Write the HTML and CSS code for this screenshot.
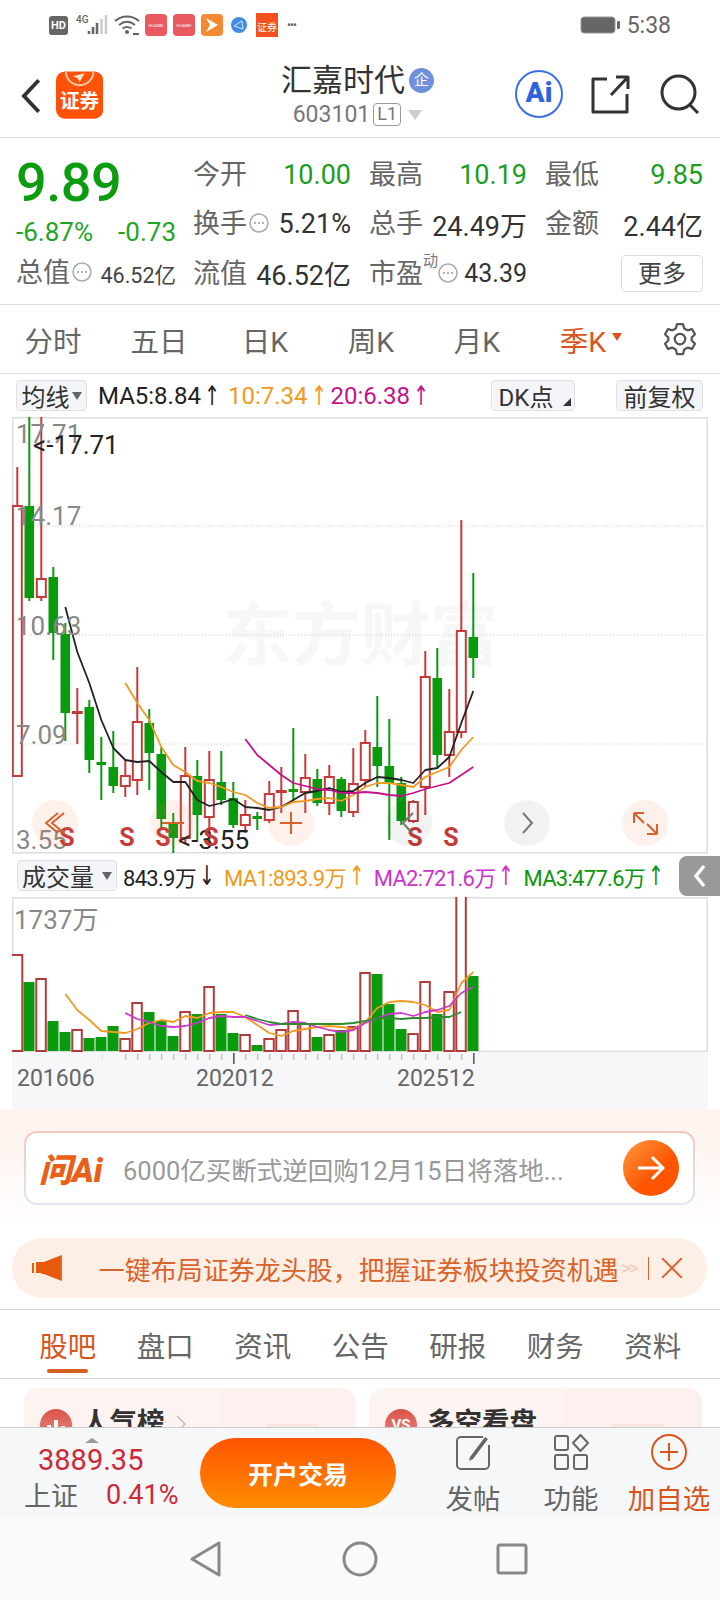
FILE: index.html
```html
<!DOCTYPE html>
<html lang="zh-CN">
<head>
<meta charset="utf-8">
<title>汇嘉时代 603101</title>
<link rel="stylesheet" href="styles.css">
</head>
<body>
<svg class="defs" width="0" height="0">
  <symbol id="more" viewBox="0 0 20 20">
    <circle cx="10" cy="10" r="9" fill="none" stroke="#aaa" stroke-width="1.5"/>
    <circle cx="6" cy="10" r="1" fill="#999"/><circle cx="10" cy="10" r="1" fill="#999"/><circle cx="14" cy="10" r="1" fill="#999"/>
  </symbol>
</svg>

<main class="page">
  <div class="status">
    <span class="hd">HD</span>
    <svg class="sig" width="33" height="22" viewBox="0 0 33 22">
      <text class="sig-4g" x="0" y="9">4G</text>
      <path d="M13 20v-3M17 20v-7M21 20V9" stroke="#666" stroke-width="2.6" fill="none"/>
      <path d="M25.5 20V5M30 20V1" stroke="#ccc" stroke-width="2.6" fill="none"/>
    </svg>
    <svg class="wifi" width="26" height="20" viewBox="0 0 26 20" fill="none" stroke="#666" stroke-width="2">
      <path d="M1 6c7-6 17-6 24 0M5 10c5-4 11-4 16 0M8.5 13.5c3-2 6-2 9 0"/>
      <circle cx="13" cy="17" r="2" fill="#666" stroke="none"/>
      <path d="M19 19h6" stroke-width="2"/>
    </svg>
    <span class="tile tile-red">HUAWEI</span>
    <span class="tile tile-red">HUAWEI</span>
    <span class="tile tile-orange"><svg width="14" height="16" viewBox="0 0 14 16"><path d="M1 1l12 7-12 7 4-7z" fill="#fff"/></svg></span>
    <svg class="globe" width="16" height="16" viewBox="0 0 16 16"><circle cx="8" cy="8" r="8" fill="#3f8de6"/><path d="M3 9l8-5 1 8z" fill="none" stroke="#d6e8fb" stroke-width="1"/></svg>
    <span class="tile-sec">证券</span>
    <span class="dots">•••</span>
    <span class="clock-group">
      <svg width="41" height="18" viewBox="0 0 41 18"><rect x="1" y="1" width="34" height="16" rx="3" fill="#666" stroke="#999"/><rect x="37" y="5" width="3" height="8" rx="1" fill="#666"/></svg>
      <span class="clock">5:38</span>
    </span>
  </div>

  <header class="hdr">
    <svg class="back" width="20" height="36" viewBox="0 0 20 36"><path d="M18 2L3 18l15 16" fill="none" stroke="#333" stroke-width="4"/></svg>
    <svg class="logo" width="48" height="48" viewBox="0 0 48 48">
      <rect width="48" height="48" rx="9" fill="#ff5208"/>
      <path d="M10 0a14 14 0 0 0 28 0" fill="none" stroke="#ffc9ae" stroke-width="2"/>
      <path d="M17 5l12-3-5 9-2-4z" fill="#ffe2d2"/>
      <text class="logo-text" x="24" y="37">证券</text>
    </svg>
    <div class="title">
      <div class="name">汇嘉时代<span class="ent">企</span></div>
      <div class="code">603101<span class="lv">L1</span><span class="caret"></span></div>
    </div>
    <div class="hdr-tools">
      <span class="ai-round">Ai</span>
      <svg width="40" height="40" viewBox="0 0 40 40" fill="none" stroke="#333" stroke-width="3"><path d="M17 5H3v33h34V20M21 21L37 4M26 3h12v12" stroke-linejoin="round"/></svg>
      <svg width="40" height="40" viewBox="0 0 40 40" fill="none" stroke="#333" stroke-width="3"><circle cx="18.5" cy="18.5" r="16.5"/><path d="M30 31l8 8"/></svg>
    </div>
  </header>

  <section class="quote">
    <div class="quote-left">
      <div class="price">9.89</div>
      <div class="delta"><span>-6.87%</span><span>-0.73</span></div>
      <div class="cap"><span class="lbl">总值</span><svg class="info"><use href="#more"/></svg><span class="cap-val">46.52亿</span></div>
    </div>
    <div class="quote-grid">
      <div class="cell"><span class="lbl">今开</span><b class="up">10.00</b></div>
      <div class="cell"><span class="lbl">最高</span><b class="up">10.19</b></div>
      <div class="cell"><span class="lbl">最低</span><b class="up">9.85</b></div>
      <div class="cell"><span class="lbl">换手</span><svg class="info"><use href="#more"/></svg><b>5.21%</b></div>
      <div class="cell"><span class="lbl">总手</span><b>24.49万</b></div>
      <div class="cell"><span class="lbl">金额</span><b>2.44亿</b></div>
      <div class="cell"><span class="lbl">流值</span><b>46.52亿</b></div>
      <div class="cell"><span class="lbl">市盈</span><sup class="dyn">动</sup><svg class="info"><use href="#more"/></svg><b class="small">43.39</b></div>
      <div class="cell cell-end"><button class="more-btn">更多</button></div>
    </div>
  </section>

  <nav class="periods">
    <span>分时</span><span>五日</span><span>日K</span><span>周K</span><span>月K</span><span class="on">季K<i class="on-caret"></i></span>
    <svg class="gear" width="36" height="36" viewBox="0 0 24 24" fill="none" stroke="#555" stroke-width="1.5" stroke-linejoin="round"><path d="M10 2h4l.8 3 2.2 1.2 3-.8 2 3.4-2.2 2.2v2l2.2 2.2-2 3.4-3-.8-2.2 1.2-.8 3h-4l-.8-3-2.2-1.2-3 .8-2-3.4 2.2-2.2v-2L2 8.8l2-3.4 3 .8 2.2-1.2z"/><circle cx="12" cy="12" r="3.5"/></svg>
  </nav>

  <div class="mabar">
    <span class="chip chip-ma">均线<i class="tri"></i></span>
    <span class="ma ink ma5">MA5:8.84<i class="arr">↑</i></span>
    <span class="ma orange">10:7.34<i class="arr">↑</i></span>
    <span class="ma plum">20:6.38<i class="arr">↑</i></span>
    <span class="chip chip-dk">DK点<i class="corner"></i></span>
    <span class="chip chip-fq">前复权</span>
  </div>

  <svg class="plot" width="696" height="437" viewBox="12 417 696 437">
    <rect class="frame" x="12.8" y="417.8" width="694.4" height="435"/>
    <text class="mark" x="223" y="660">东方财富</text>
    <path class="grid" d="M13 526H707M13 635H707M13 744H707"/>

    <path class="wick-r" d="M17.3 467V506M41.3 417V579M41.3 597V601M77.3 688V712M77.3 713V744M125.3 760V776M125.3 786V797M137.3 667V722M137.3 780V795M185.3 747V776M185.3 838V843M209.3 751V780M209.3 817V840M245.3 800V815M245.3 825V833M269.3 781V794M269.3 820V823M281.3 767V791M281.3 791V813M305.3 754V778M305.3 792V813M329.3 765V777M329.3 803V815M353.3 748V784M353.3 812V817M365.3 730V743M365.3 780V787M413.3 800V802M413.3 821V823M425.3 651V677M425.3 787V815M449.3 689V732M449.3 755V777M461.3 520V631M461.3 732V738"/>
    <g class="body-r">
      <rect x="12.8" y="506" height="270"/><rect x="36.8" y="579" height="18"/><rect x="72.8" y="712" height="1"/><rect x="120.8" y="776" height="10"/><rect x="132.8" y="722" height="58"/><rect x="180.8" y="776" height="62"/><rect x="204.8" y="780" height="37"/><rect x="240.8" y="815" height="10"/><rect x="264.8" y="794" height="26"/><rect x="276.8" y="791" height="1"/><rect x="300.8" y="778" height="14"/><rect x="324.8" y="777" height="26"/><rect x="348.8" y="784" height="28"/><rect x="360.8" y="743" height="37"/><rect x="408.8" y="802" height="19"/><rect x="420.8" y="677" height="110"/><rect x="444.8" y="732" height="23"/><rect x="456.8" y="631" height="101"/>
    </g>
    <path class="wick-g" d="M29.3 417V601M53.3 567V660M65.3 623V741M89.3 700V773M101.3 737V800M113.3 731V793M149.3 709V790M161.3 747V828M173.3 813V853M197.3 760V840M221.3 751V805M233.3 782V828M257.3 812V830M293.3 728V803M317.3 769V806M341.3 777V817M377.3 696V787M389.3 719V840M401.3 777V825M437.3 648V767M473.3 573V678"/>
    <g class="body-g">
      <rect x="24.5" y="506" height="92"/><rect x="48.5" y="577" height="56"/><rect x="60.5" y="634" height="79"/><rect x="84.5" y="707" height="53"/><rect x="96.5" y="762" height="3"/><rect x="108.5" y="767" height="19"/><rect x="144.5" y="723" height="30"/><rect x="156.5" y="754" height="65"/><rect x="168.5" y="823" height="15"/><rect x="192.5" y="776" height="39"/><rect x="216.5" y="782" height="18"/><rect x="228.5" y="798" height="27"/><rect x="252.5" y="816" height="3"/><rect x="288.5" y="789" height="3"/><rect x="312.5" y="779" height="24"/><rect x="336.5" y="779" height="32"/><rect x="372.5" y="747" height="19"/><rect x="384.5" y="766" height="18"/><rect x="396.5" y="783" height="38"/><rect x="432.5" y="678" height="77"/><rect x="468.5" y="637" height="21"/>
    </g>

    <polyline class="ln ln-ink" points="65.3,607 77.3,652 89.3,683 101.3,720 113.3,748 125.3,760 137.3,762 149.3,761 161.3,772 173.3,782 185.3,782 197.3,800 209.3,806 221.3,803 233.3,799 245.3,807 257.3,808 269.3,810 281.3,807 293.3,800 305.3,793 317.3,791 329.3,788 341.3,792 353.3,791 365.3,783 377.3,777 389.3,778 401.3,780 413.3,783 425.3,770 437.3,768 449.3,757 461.3,723 473.3,691"/>
    <polyline class="ln ln-orange" points="125.3,683 137.3,703 149.3,720 161.3,747 173.3,765 185.3,772 197.3,781 209.3,783 221.3,787 233.3,792 245.3,795 257.3,803 269.3,808 281.3,807 293.3,802 305.3,801 317.3,799 329.3,798 341.3,801 353.3,795 365.3,787 377.3,783 389.3,783 401.3,785 413.3,787 425.3,777 437.3,772 449.3,767 461.3,750 473.3,737"/>
    <polyline class="ln ln-plum" points="245.3,739 257.3,755 269.3,765 281.3,775 293.3,783 305.3,786 317.3,789 329.3,790 341.3,793 353.3,793 365.3,792 377.3,793 389.3,795 401.3,796 413.3,793 425.3,789 437.3,786 449.3,783 461.3,775 473.3,767"/>

    <text class="ax" x="16" y="443">17.71</text>
    <text class="ax" x="16" y="525">14.17</text>
    <text class="ax" x="16" y="635">10.63</text>
    <text class="ax" x="16" y="744">7.09</text>
    <text class="ax" x="16" y="849">3.55</text>
    <text class="ext" x="33" y="454">&lt;-17.71</text>
    <text class="ext" x="178" y="849">&lt;-3.55</text>

    <g class="sell">
      <text x="67" y="846">S</text><text x="127" y="846">S</text><text x="163" y="846">S</text><text x="211" y="846">S</text><text x="415" y="846">S</text><text x="451" y="846">S</text>
    </g>

    <circle class="btn-warm" cx="55" cy="823" r="23"/>
    <circle class="btn-warm" cx="173" cy="823" r="23"/>
    <circle class="btn-warm" cx="291" cy="823" r="23"/>
    <circle class="btn-cool" cx="409" cy="823" r="23"/>
    <circle class="btn-cool" cx="527" cy="823" r="23"/>
    <circle class="btn-warm" cx="645" cy="823" r="23"/>
    <path class="glyph-warm" d="M58 813L46 823l12 10M64 813L52 823l12 10M162 823h22M280 823h22M291 812v22M634 813v10M634 813h10M634 813l10 10M657 834v-10M657 834h-10M657 834l-10-10"/>
    <path class="glyph-cool" d="M413 813l-10 10 9 10M523 813l9 10-9 10"/>
  </svg>

  <div class="volbar">
    <span class="chip chip-vol">成交量<i class="tri"></i></span>
    <span class="vol ink v0">843.9万<i class="arr">↓</i></span>
    <span class="vol orange">MA1:893.9万<i class="arr">↑</i></span>
    <span class="vol violet">MA2:721.6万<i class="arr">↑</i></span>
    <span class="vol leaf">MA3:477.6万<i class="arr">↑</i></span>
    <span class="fold"><svg width="14" height="24" viewBox="0 0 14 24"><path d="M11 2L3 12l8 10" fill="none" stroke="#fff" stroke-width="3.5"/></svg></span>
  </div>

  <svg class="volplot" width="696" height="155" viewBox="12 897 696 155">
    <rect class="frame" x="12.8" y="897.8" width="694.4" height="153.5"/>
    <g class="vol-g">
      <rect x="23.5" y="982" height="69"/><rect x="47.5" y="1021" height="30"/><rect x="59.5" y="1032" height="19"/><rect x="83.5" y="1038" height="13"/><rect x="95.5" y="1037" height="14"/><rect x="107.5" y="1026" height="25"/><rect x="143.5" y="1012" height="39"/><rect x="155.5" y="1021" height="30"/><rect x="167.5" y="1036" height="15"/><rect x="191.5" y="1014" height="37"/><rect x="215.5" y="1014" height="37"/><rect x="227.5" y="1033" height="18"/><rect x="251.5" y="1045" height="6"/><rect x="311.5" y="1037" height="14"/><rect x="335.5" y="1030" height="21"/><rect x="371.5" y="974" height="77"/><rect x="383.5" y="1004" height="47"/><rect x="395.5" y="1029" height="22"/><rect x="431.5" y="1014" height="37"/><rect x="467.5" y="976" height="75"/>
    </g>
    <g class="vol-r">
      <rect x="10" y="955" height="96"/><rect x="36.3" y="979" height="72"/><rect x="72.3" y="1030" height="21"/><rect x="120.3" y="1039" height="12"/><rect x="132.3" y="1003" height="48"/><rect x="180.3" y="1012" height="39"/><rect x="204.3" y="987" height="64"/><rect x="240.3" y="1035" height="16"/><rect x="264.3" y="1039" height="12"/><rect x="276.3" y="1030" height="21"/><rect x="288.3" y="1011" height="40"/><rect x="300.3" y="1024" height="27"/><rect x="324.3" y="1035" height="16"/><rect x="348.3" y="1027" height="24"/><rect x="360.3" y="973" height="78"/><rect x="408.3" y="1034" height="17"/><rect x="420.3" y="982" height="69"/><rect x="444.3" y="992" height="59"/><rect x="456.3" y="890" height="161"/>
    </g>
    <polyline class="ln ln-orange" points="65.3,994 77.3,1010 89.3,1020 101.3,1031 113.3,1032 125.3,1033 137.3,1029 149.3,1023 161.3,1020 173.3,1022 185.3,1016 197.3,1018 209.3,1013 221.3,1012 233.3,1012 245.3,1017 257.3,1025 269.3,1033 281.3,1036 293.3,1031 305.3,1029 317.3,1027 329.3,1026 341.3,1027 353.3,1029 365.3,1022 377.3,1008 389.3,1002 401.3,1001 413.3,1002 425.3,1005 437.3,1012 449.3,1010 461.3,983 473.3,972"/>
    <polyline class="ln ln-violet" points="125.3,1013 137.3,1019 149.3,1022 161.3,1026 173.3,1027 185.3,1026 197.3,1023 209.3,1018 221.3,1016 233.3,1017 245.3,1017 257.3,1021 269.3,1025 281.3,1024 293.3,1022 305.3,1023 317.3,1027 329.3,1030 341.3,1032 353.3,1030 365.3,1023 377.3,1018 389.3,1014 401.3,1013 413.3,1016 425.3,1012 437.3,1010 449.3,1006 461.3,993 473.3,987"/>
    <polyline class="ln ln-leaf" points="245.3,1015 257.3,1019 269.3,1022 281.3,1024 293.3,1024 305.3,1024 317.3,1024 329.3,1024 341.3,1024 353.3,1023 365.3,1021 377.3,1018 389.3,1018 401.3,1019 413.3,1018 425.3,1018 437.3,1017 449.3,1017 461.3,1012"/>
    <text class="ax" x="14" y="929">1737万</text>
  </svg>

  <svg class="axis" width="696" height="58" viewBox="12 1052 696 58">
    <path class="tick-fade" d="M101.8 1057H114"/>
    <path class="tick" d="M125.3 1057H473"/>
    <path class="tick-major" d="M233.8 1053v11M473.8 1053v11"/>
    <text class="axis-text" x="17" y="1086">201606</text>
    <text class="axis-text" x="196" y="1086">202012</text>
    <text class="axis-text" x="397" y="1086">202512</text>
  </svg>

  <section class="promo">
    <div class="ask">
      <span class="ask-logo">问Ai</span>
      <span class="ask-text">6000亿买断式逆回购12月15日将落地...</span>
      <span class="ask-go"><svg width="28" height="26" viewBox="0 0 28 26" fill="none" stroke="#fff" stroke-width="3"><path d="M1 13h25M15 2l11 11-11 11"/></svg></span>
    </div>
    <div class="notice">
      <svg class="horn" width="30" height="26" viewBox="0 0 30 26"><path d="M0 8h2v10H0zM4 7h8L30 0v26l-18-7-2 0-1-1H4z" fill="#e75a0c"/></svg>
      <span class="notice-text">一键布局证券龙头股，把握证券板块投资机遇</span>
      <span class="notice-more">&gt;&gt;</span>
      <span class="notice-sep"></span>
      <svg width="22" height="20" viewBox="0 0 22 20" fill="none" stroke="#d9632a" stroke-width="2"><path d="M1 0l20 20M21 0L1 20"/></svg>
    </div>
  </section>

  <nav class="tabs">
    <span class="on">股吧</span><span>盘口</span><span>资讯</span><span>公告</span><span>研报</span><span>财务</span><span>资料</span>
  </nav>

  <section class="cards">
    <article class="card">
      <span class="card-icon"><svg width="18" height="16" viewBox="0 0 18 16" fill="#fff"><path d="M0 8h4v8H0zM7 3h4v13H7zM14 9h4v7h-4z"/></svg></span>
      <h3>人气榜</h3>
      <svg class="card-go" width="10" height="18" viewBox="0 0 10 18"><path d="M1 1l8 8-8 8" fill="none" stroke="#bbb" stroke-width="1.5"/></svg>
    </article>
    <article class="card">
      <span class="card-icon card-vs">VS</span>
      <h3>多空看盘</h3>
    </article>
  </section>
</main>

<footer class="dock">
  <div class="index">
    <div class="index-num">3889.35</div>
    <div class="index-row"><span class="index-name">上证</span><span class="index-pct">0.41%</span></div>
  </div>
  <button class="trade">开户交易</button>
  <div class="act">
    <svg width="36" height="36" viewBox="0 0 36 36" fill="none" stroke="#666" stroke-width="2"><path d="M28 3H6a4 4 0 0 0-4 4v24a4 4 0 0 0 4 4h24a4 4 0 0 0 4-4V11"/><path d="M15 23L30 3l3 2-15 20-4 2z" fill="#666" stroke="none"/></svg>
    <span>发帖</span>
  </div>
  <div class="act">
    <svg width="36" height="36" viewBox="0 0 36 36" fill="none" stroke="#666" stroke-width="2"><rect x="2" y="2" width="13" height="14" rx="2"/><rect x="2" y="21" width="13" height="14" rx="2"/><rect x="21" y="21" width="13" height="14" rx="2"/><path d="M27.5 1L35 9l-7.500 8L20 9z" stroke-linejoin="round"/></svg>
    <span>功能</span>
  </div>
  <div class="act act-on">
    <svg width="36" height="36" viewBox="0 0 36 36" fill="none" stroke="#d9551c" stroke-width="2"><circle cx="18" cy="18" r="17"/><path d="M9 18h18M18 9v18"/></svg>
    <span>加自选</span>
  </div>
</footer>

<div class="sysnav">
  <svg width="31" height="36" viewBox="0 0 31 36" fill="none" stroke="#888" stroke-width="3" stroke-linejoin="round"><path d="M29 2v32L2 18z"/></svg>
  <svg width="36" height="36" viewBox="0 0 36 36" fill="none" stroke="#888" stroke-width="3"><circle cx="18" cy="18" r="16"/></svg>
  <svg class="nav-recent" width="32" height="32" viewBox="0 0 32 32" fill="none" stroke="#888" stroke-width="3" stroke-linejoin="round"><rect x="2" y="2" width="28" height="28" rx="2"/></svg>
</div>
</body>
</html>
```

FILE: styles.css
```css
* { box-sizing: border-box; }

html, body { margin: 0; padding: 0; }

body {
  width: 720px;
  height: 1600px;
  display: flex;
  flex-direction: column;
  overflow: hidden;
  background: #fff;
  color: #333;
  font-family: Roboto, "Noto Sans CJK SC", sans-serif;
}

i { font-style: normal; }
.defs { position: absolute; }
.ink { color: #222; }
.orange { color: #f09a22; }
.plum { color: #c5128a; }
.violet { color: #cc33cc; }
.leaf { color: #0c960c; }

.page { flex: 1; min-height: 0; overflow: hidden; }

/* phone status bar */
.status {
  height: 50px;
  display: flex;
  align-items: center;
  padding: 0 49px 0 49px;
}
.hd {
  width: 19px; height: 19px;
  margin-right: 8px;
  border-radius: 3px;
  background: #666;
  color: #fff;
  font-size: 11px;
  font-weight: 700;
  line-height: 19px;
  text-align: center;
}
.sig { margin-right: 5px; }
.sig-4g { font-size: 10px; fill: #666; font-weight: 500; }
.wifi { margin-right: 5px; }
.tile {
  width: 22px; height: 22px;
  margin-right: 6px;
  border-radius: 4px;
  display: flex;
  align-items: center;
  justify-content: center;
  color: #fff;
  font-size: 4px;
}
.tile-red { background: #e85a60; }
.tile-orange { background: #f58a35; margin-right: 8px; }
.globe { margin-right: 9px; }
.tile-sec {
  width: 22px; height: 24px;
  margin-right: 9px;
  background: #f4511e;
  color: #fff;
  font-size: 10px;
  line-height: 30px;
  text-align: center;
}
.dots { color: #666; font-size: 12px; letter-spacing: -1px; }
.clock-group { margin-left: auto; display: flex; align-items: center; gap: 6px; }
.clock { color: #666; font-size: 23px; }

/* stock header */
.hdr {
  height: 88px;
  display: flex;
  align-items: center;
  padding: 0 20px 0 21px;
  border-bottom: 1.5px solid #ddd;
}
.back { margin-top: 5px; }
.logo { margin-left: 15px; margin-top: 2px; }
.logo-text { fill: #fff; font-size: 20px; font-weight: 700; text-anchor: middle; }
.title { width: 320px; margin-left: 97px; margin-top: 2px; text-align: center; }
.name {
  display: flex; align-items: center; justify-content: center;
  font-size: 31px;
  line-height: 40px;
  color: #333;
}
.ent {
  width: 25px; height: 25px;
  margin-left: 4px;
  border-radius: 50%;
  background: #6f90dc;
  color: #fff;
  font-size: 15px;
  line-height: 25px;
}
.code {
  display: flex; align-items: center; justify-content: center;
  color: #777;
  font-size: 23px;
  line-height: 28px;
}
.lv {
  width: 28px; height: 23px;
  margin-left: 3px;
  border: 1.5px solid #999;
  border-radius: 4px;
  font-size: 18px;
  line-height: 20px;
}
.caret {
  margin-left: 7px;
  border: 7px solid transparent;
  border-top: 10px solid #ccc;
  border-bottom: 0;
}
.hdr-tools { margin-left: auto; display: flex; align-items: center; gap: 30px; }
.ai-round {
  width: 48px; height: 48px;
  margin-right: -3px;
  border: 2.5px solid #3b6fe0;
  border-radius: 50%;
  color: #2f63de;
  font-size: 28px;
  font-weight: 900;
  line-height: 42px;
  text-align: center;
}

/* quote summary */
.quote {
  height: 167px;
  display: flex;
  padding: 12px 17px 0 16px;
  border-bottom: 1.5px solid #ddd;
}
.quote-left { width: 160px; margin-right: 17px; }
.price {
  height: 54px;
  margin-top: 6px;
  color: #0c9c10;
  font-size: 54px;
  font-weight: 500;
  line-height: 54px;
  letter-spacing: -0.5px;
}
.delta {
  display: flex; justify-content: space-between;
  height: 50px;
  color: #1ea524;
  font-size: 26px;
  line-height: 50px;
  margin-top: -3px;
}
.cap { display: flex; align-items: center; height: 40px; margin-top: -4px; }
.cap-val { margin-left: auto; color: #444; font-size: 21.5px; }
.lbl { color: #666; font-size: 27px; line-height: 40px; white-space: nowrap; }
.info { width: 20px; height: 20px; margin: 0 0 2px 2px; flex: none; }
.quote-grid {
  flex: 1;
  display: grid;
  grid-template-columns: repeat(3, 158px);
  grid-auto-rows: 49.5px;
  column-gap: 18px;
}
.cell { display: flex; align-items: center; height: 49.5px; }
.cell b { margin-left: auto; color: #333; font-size: 27px; font-weight: 400; white-space: nowrap; }
.cell b.up { color: #1b9d21; }
.cell b.small { font-size: 25px; }
.dyn { align-self: flex-start; color: #777; font-size: 15px; line-height: 16px; margin-top: 4px; width: 15px; }
.dyn + .info { margin-left: 0; }
.cell-end { justify-content: flex-end; }
.more-btn {
  width: 82px; height: 37px;
  border: 1.5px solid #ddd;
  border-radius: 4px;
  background: #fff;
  color: #444;
  font: inherit;
  font-size: 24px;
  line-height: 32px;
  padding: 0;
}

/* period switch */
.periods {
  height: 69px;
  display: grid;
  grid-template-columns: repeat(6, 106px) 1fr;
  align-items: center;
  justify-items: center;
  color: #666;
  font-size: 28.5px;
  border-bottom: 1.5px solid #ddd;
}
.periods .on { color: #d9551c; position: relative; }
.on-caret {
  position: absolute;
  top: 14px; left: 100%;
  margin-left: 6px;
  border: 5px solid transparent;
  border-top: 8px solid #d9551c;
  border-bottom: 0;
}
.gear { justify-self: start; margin: 0 0 0 26px; }

/* moving average rows */
.chip {
  height: 31px;
  display: flex; align-items: center; justify-content: center;
  position: relative;
  border: 1.5px solid #e0e1e6;
  border-radius: 4px;
  background: #f4f5f8;
  color: #333;
  font-size: 24px;
}
.mabar { height: 43px; display: flex; align-items: center; padding: 0 17px 0 16px; }
.chip-ma { width: 71px; padding-right: 12px; }
.chip-dk { width: 84px; margin-left: auto; padding-right: 14px; }
.chip-fq { width: 87px; margin-left: 41px; }
.tri {
  position: absolute;
  right: 4px; top: 11px;
  border: 5px solid transparent;
  border-top: 8px solid #666;
  border-bottom: 0;
}
.corner {
  position: absolute;
  right: 3px; bottom: 4px;
  border-left: 8px solid transparent;
  border-bottom: 8px solid #333;
}
.ma { display: flex; align-items: center; font-size: 24px; white-space: nowrap; }
.ma5 { margin-left: 11px; }
.ma.orange { margin-left: 5px; }
.ma.plum { margin-left: 1px; }
.arr {
  display: inline-block;
  width: 22px;
  text-align: center;
  font-family: "DejaVu Sans", sans-serif;
  font-size: 27px;
  font-weight: 400;
  letter-spacing: 0;
  line-height: 1;
  transform: scaleX(.7);
}

.plot, .volplot, .axis { display: block; margin-left: 12px; }
.frame { fill: none; stroke: #ddd; stroke-width: 1.5; }
.mark { fill: #f7f7f7; font-size: 69px; font-weight: 700; }
.grid { fill: none; stroke: #ccc; stroke-width: 1; stroke-dasharray: 1 2; }
.wick-r, .wick-g { fill: none; stroke-width: 2; }
.wick-r { stroke: #c73a3a; }
.wick-g { stroke: #0a9a0e; }
.body-r rect { width: 9px; fill: #fff; stroke: #c73a3a; stroke-width: 2; }
.body-g rect { width: 9.6px; fill: #0a9a0e; }
.ln { fill: none; stroke-width: 1.8; stroke-linejoin: round; }
.ln-ink { stroke: #222; }
.ln-orange { stroke: #f09a22; }
.ln-plum { stroke: #c5128a; }
.ln-violet { stroke: #cc3acc; }
.ln-leaf { stroke: #2e8b2e; }
.ax { fill: #888; font-size: 26px; }
.ext { fill: #222; font-size: 26px; }
.sell text { fill: #c53b3b; font-size: 25px; font-weight: 700; text-anchor: middle; }
.btn-warm { fill: rgba(250, 120, 70, .1); }
.btn-cool { fill: rgba(0, 0, 0, .05); }
.glyph-warm { fill: none; stroke: #d9622a; stroke-width: 2; }
.glyph-cool { fill: none; stroke: #777; stroke-width: 2; }

.volbar { height: 43px; display: flex; align-items: center; padding-left: 17px; position: relative; }
.chip-vol { width: 100px; padding-right: 18px; }
.vol {
  display: flex; align-items: center;
  margin-left: 8px;
  font-size: 22px;
  letter-spacing: -.7px;
  white-space: nowrap;
}
.vol .arr { width: 20px; }
.vol.v0 { margin-left: 6px; }
.fold {
  position: absolute;
  right: 0; top: 2px;
  width: 41px; height: 40px;
  display: flex; align-items: center; justify-content: center;
  border-radius: 8px 0 0 8px;
  background: #999;
}

.vol-g rect { width: 11px; fill: #0a9a0e; }
.vol-r rect { width: 9.5px; fill: #fff; stroke: #b23b3b; stroke-width: 2; }
.vol-r rect:first-child { width: 12.3px; }

.axis { background: #f7f7f9; }
.tick, .tick-fade { fill: none; stroke-width: 6; stroke-dasharray: 1 11; }
.tick { stroke: #aaa; }
.tick-fade { stroke: #ddd; }
.tick-major { fill: none; stroke: #555; stroke-width: 1.5; }
.axis-text { fill: #666; font-size: 23px; }

/* assistant box and notice */
.promo {
  padding: 21px 13px 11px 12px;
  background: linear-gradient(#fff2ec, #fff 120px);
  border-bottom: 1.5px solid #d8d8d8;
}
.ask {
  height: 74px;
  margin: 0 12px 33px;
  display: flex; align-items: center;
  padding: 0 14px;
  border: 2px solid transparent;
  border-radius: 13px;
  background: linear-gradient(#fff, #fff) padding-box, linear-gradient(#f6c5b8, #dfe6f5) border-box;
}
.ask-logo {
  width: 70px;
  margin-left: -1px;
  color: #ea5f1a;
  font-size: 33px;
  font-style: italic;
  font-weight: 900;
  white-space: nowrap;
}
.ask-text { margin-left: 14px; color: #999; font-size: 25.5px; white-space: nowrap; }
.ask-go {
  width: 56px; height: 56px;
  margin-left: auto;
  display: flex; align-items: center; justify-content: center;
  border-radius: 50%;
  background: linear-gradient(135deg, #ff9a40, #ff5500 60%);
}
.notice {
  height: 60px;
  display: flex; align-items: center;
  padding: 0 24px 0 20px;
  border-radius: 30px;
  background: #fdeee6;
}
.notice-text { margin-left: 37px; color: #d9632a; font-size: 26px; white-space: nowrap; }
.notice-more { margin-left: 2px; color: #f3cdbb; font-size: 20px; letter-spacing: -3px; width: 27px; }
.notice-sep { width: 1.5px; height: 23px; margin-right: 12px; background: #d9632a; }

/* detail tabs */
.tabs {
  height: 69px;
  display: grid;
  grid-template-columns: repeat(7, 97.5px);
  padding: 0 0 0 19px;
  align-items: center;
  justify-items: center;
  color: #666;
  font-size: 28.5px;
  border-bottom: 1.5px solid #d8d8d8;
}
.tabs .on { color: #d9551c; position: relative; }
.tabs .on::after {
  content: "";
  position: absolute;
  left: 8px; right: 8px; bottom: -8px;
  height: 4px;
  border-radius: 2px;
  background: #d2601f;
}

.cards { display: grid; grid-template-columns: 332px 333px; gap: 13px; padding: 9px 18px 0 24px; }
.card {
  height: 130px;
  position: relative;
  display: flex; align-items: flex-start;
  padding: 21px 0 0 16px;
  border-radius: 14px;
  background: linear-gradient(to right, #fdf4f2 0 59%, #fdf0ee 59%);
}
.card::after {
  content: "";
  position: absolute;
  right: 38px; top: 36px;
  width: 52px; height: 30px;
  background: #fbe5e1;
}
.card h3 { margin: -8px 0 0 10px; color: #333; font-size: 27.5px; font-weight: 700; line-height: 44px; }
.card-icon {
  width: 32px; height: 32px;
  display: flex; align-items: center; justify-content: center;
  border-radius: 50%;
  background: linear-gradient(#d9534a, #eb8a82);
  color: #fff;
  font-size: 15px;
  font-weight: 700;
}
.card-go { margin: 6px 0 0 11px; }

/* bottom action bar */
.dock {
  height: 91px;
  flex: none;
  display: flex; align-items: center;
  background: #f6f7f9;
  border-top: 1.5px solid #ccc;
}
.index { width: 200px; padding: 7px 0 0 24px; position: relative; }
.index::before {
  content: "";
  position: absolute;
  left: 85px; top: 3px;
  border: 7px solid transparent;
  border-bottom: 5px solid #999;
  border-top: 0;
}
.index-num { margin-left: 14px; color: #cc2a36; font-size: 29px; line-height: 36px; }
.index-row { display: flex; align-items: center; height: 34px; }
.index-name { color: #666; font-size: 27px; }
.index-pct { margin-left: 28px; color: #cc2a36; font-size: 27px; }
.trade {
  width: 196px; height: 70px;
  margin-right: 28px;
  border: 0;
  border-radius: 35px;
  background: linear-gradient(#ff5500, #ff8c00);
  color: #fff;
  font: inherit;
  font-size: 25px;
  font-weight: 700;
}
.act {
  width: 98px;
  display: flex; flex-direction: column; align-items: center;
  color: #666;
  font-size: 27.5px;
  line-height: 36px;
  padding-top: 5px;
  gap: 12px;
}
.act-on { color: #d9551c; }

/* system navigation */
.sysnav {
  height: 82px;
  flex: none;
  display: flex; align-items: center;
  padding: 0 0 0 190px;
  gap: 121px;
  background: #fafafa;
}
.nav-recent { margin-left: -3px; }
```
